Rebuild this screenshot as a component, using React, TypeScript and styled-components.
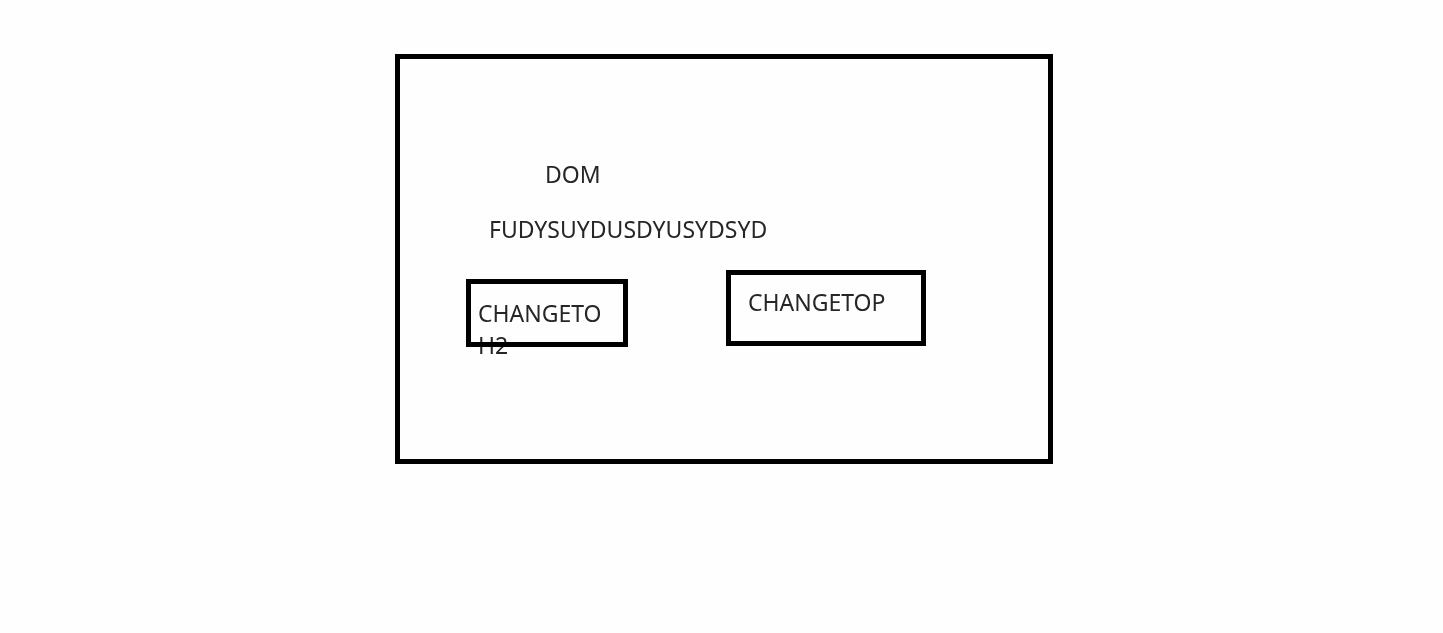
import React from "react";
import styled, { createGlobalStyle } from "styled-components";

const GlobalStyle = createGlobalStyle`
  * { box-sizing: border-box; }
  body {
    margin: 0;
    background: #fefefe;
    color: #262626;
    font-family: "Noto Sans", "Open Sans", sans-serif;
    font-size: 23px;
    line-height: 32px;
  }
`;

const Page = styled.main`
  display: flex;
  justify-content: center;
  padding: 54px 0 54px 5px;
`;

const Frame = styled.section`
  width: 100%;
  max-width: 658px;
  padding: 99px 64px 112px 66px;
  border: 5px solid #000;
`;

const Title = styled.h1`
  margin: 0 0 23px;
  padding-left: 79px;
  font-size: inherit;
  font-weight: 400;
`;

const Message = styled.p`
  margin: 0 0 25px;
  padding-left: 23px;
  font-size: inherit;
  font-weight: 400;
`;

const Actions = styled.div`
  display: flex;
  align-items: flex-start;
  gap: 98px;
`;

const ActionButton = styled.button<{ $compact?: boolean }>`
  display: flex;
  flex-direction: column;
  align-items: flex-start;
  justify-content: flex-start;
  width: ${(p) => (p.$compact ? 162 : 200)}px;
  height: ${(p) => (p.$compact ? 68 : 76)}px;
  margin: ${(p) => (p.$compact ? "9px 0 0" : "0")};
  padding: ${(p) => (p.$compact ? "13px 7px 0" : "11px 17px 0")};
  border: 5px solid #000;
  background: transparent;
  color: inherit;
  font: inherit;
  text-align: left;
  cursor: pointer;
`;

/* Keeps the border solid where a wrapped label runs over it. */
const ButtonLabel = styled.span`
  mix-blend-mode: multiply;
`;

export default function App() {
  const [tag, setTag] = React.useState<"p" | "h2">("p");

  return (
    <>
      <GlobalStyle />
      <Page>
        <Frame>
          <Title>DOM</Title>
          <Message as={tag}>FUDYSUYDUSDYUSYDSYD</Message>
          <Actions>
            <ActionButton type="button" $compact onClick={() => setTag("h2")}>
              <ButtonLabel>CHANGETO H2</ButtonLabel>
            </ActionButton>
            <ActionButton type="button" onClick={() => setTag("p")}>
              <ButtonLabel>CHANGETOP</ButtonLabel>
            </ActionButton>
          </Actions>
        </Frame>
      </Page>
    </>
  );
}
